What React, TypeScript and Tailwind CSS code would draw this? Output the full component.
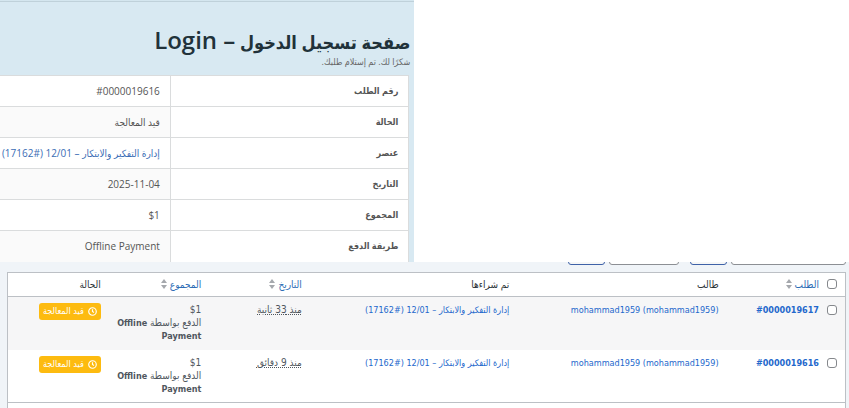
import type { ReactNode } from "react";

type OrderRow = {
  id: string;
  user: string;
  item: string;
  date: string;
  total: string;
};

const details: { label: string; value: string; href?: string }[] = [
  { label: "رقم الطلب", value: "#0000019616" },
  { label: "الحالة", value: "قيد المعالجة" },
  { label: "عنصر", value: "إدارة التفكير والابتكار – 12/01 (#17162)", href: "#item" },
  { label: "التاريخ", value: "2025-11-04" },
  { label: "المجموع", value: "$1" },
  { label: "طريقة الدفع", value: "Offline Payment" },
];

const orders: OrderRow[] = [
  {
    id: "#0000019617",
    user: "mohammad1959 (mohammad1959)",
    item: "إدارة التفكير والابتكار – 12/01 (#17162)",
    date: "منذ 33 ثانية",
    total: "$1",
  },
  {
    id: "#0000019616",
    user: "mohammad1959 (mohammad1959)",
    item: "إدارة التفكير والابتكار – 12/01 (#17162)",
    date: "منذ 9 دقائق",
    total: "$1",
  },
];

function SortLink({ children }: { children: ReactNode }) {
  return (
    <a href="#sort" className="inline-flex items-center gap-[3px] text-[#2c6cb5]">
      {children}
      <svg viewBox="0 0 6 10" className="h-[10px] w-[6px]" fill="#a5a8ad" aria-hidden>
        <path d="M3 0l3 4H0z" />
        <path d="M3 10l3-4H0z" />
      </svg>
    </a>
  );
}

function StatusBadge() {
  return (
    <span className="flex h-[17px] w-fit items-center gap-1 rounded-[3px] bg-[#fdbb10] px-1 text-[9px] leading-none whitespace-nowrap text-white">
      <svg viewBox="0 0 10 10" className="h-[9px] w-[9px]" fill="none" stroke="currentColor" strokeWidth="1.3" aria-hidden>
        <circle cx="5" cy="5" r="4.2" />
        <path d="M5 2.5V5l1.6 1.2" />
      </svg>
      قيد المعالجة
    </span>
  );
}

function Checkbox({ label }: { label: string }) {
  return (
    <input
      type="checkbox"
      aria-label={label}
      className="block h-[10px] w-[10px] appearance-none rounded-[3px] border border-[#85888c] bg-white checked:bg-[#2271b1]"
    />
  );
}

function OrderDetails() {
  return (
    <section className="w-[48.8%] min-w-[380px] border-t border-[#d4e6ef] bg-[#d8e9f2] font-['Open_Sans','DejaVu_Sans_Condensed',sans-serif]">
      <div className="border-t border-[#bfd1da] px-1 pt-[23px]">
        <h1 className="text-[18px] leading-[30px] font-semibold whitespace-nowrap text-[#21323a]">
          صفحة تسجيل الدخول <span className="text-2xl leading-[30px]">– Login</span>
        </h1>
        <p className="h-[18px] text-[9px] leading-[10px] text-[#666]">شكرًا لك. تم إستلام طلبك.</p>
      </div>
      <div className="ps-[5px]">
        <table className="w-full table-fixed border-collapse text-[10px] leading-4 text-[#555]">
          <tbody>
            {details.map(({ label, value, href }) => (
              <tr key={label} className="group h-[31px] border-t border-[#dadcdd] bg-white">
                <th scope="row" className="w-7/12 border-s border-[#dadcdd] px-[10px] text-start text-[9px] font-bold">
                  {label}
                </th>
                <td className="border-s border-[#dadcdd] px-[10px] whitespace-nowrap group-even:bg-[#fafafa]">
                  {href ? <a href={href} className="text-[#3b6db5]">{value}</a> : value}
                </td>
              </tr>
            ))}
          </tbody>
        </table>
      </div>
    </section>
  );
}

function FilterBar() {
  return (
    <div className="flex h-[3px] items-end gap-1 overflow-hidden ps-[3px]">
      <input type="text" aria-label="بحث" className="h-6 w-[115px] shrink-0 rounded-[3px] border border-[#8c8f94] bg-white" />
      <button type="button" aria-label="بحث" className="me-[7px] h-6 w-[37px] shrink-0 rounded-[3px] border border-[#3f62a8] bg-[#f6f7f7]" />
      <select aria-label="الحالة" className="h-6 w-[70px] shrink-0 appearance-none rounded-[3px] border border-[#8c8f94] bg-white" />
      <button type="button" aria-label="تصفية" className="h-6 w-[37px] shrink-0 rounded-[3px] border border-[#3f62a8] bg-[#f6f7f7]" />
    </div>
  );
}

function OrdersTable() {
  return (
    <section className="bg-[#f0f4f8] font-['DejaVu_Sans_Condensed',sans-serif]">
      <FilterBar />
      <div className="ms-[3px] me-[7px] mt-[7px] border border-b-0 border-[#bcc0c5] bg-white">
        <table className="w-full table-fixed border-collapse text-[10px] leading-[13px] text-[#50575e]">
          <colgroup>
            <col className="w-[18px]" />
            <col className="w-[12%]" />
            <col className="w-[25%]" />
            <col className="w-[24.8%]" />
            <col className="w-[12%]" />
            <col className="w-[12%]" />
            <col />
          </colgroup>
          <thead>
            <tr className="h-6 border-b border-[#bcc0c5] text-[#2c3338] [&>th]:ps-2 [&>th]:text-start [&>th]:font-normal">
              <th scope="col"><Checkbox label="تحديد الكل" /></th>
              <th scope="col"><SortLink>الطلب</SortLink></th>
              <th scope="col">طالب</th>
              <th scope="col">تم شراءها</th>
              <th scope="col"><SortLink>التاريخ</SortLink></th>
              <th scope="col"><SortLink>المجموع</SortLink></th>
              <th scope="col">الحالة</th>
            </tr>
          </thead>
          <tbody>
            {orders.map((order) => (
              <tr key={order.id} className="h-[53px] align-top odd:bg-[#f6f6f7] [&>td]:ps-2 [&>td]:pt-[6px]">
                <td><div className="pt-[2px]"><Checkbox label={order.id} /></div></td>
                <td><a href="#order" className="text-[9px] font-bold text-[#2468cc]">{order.id}</a></td>
                <td><a href="#user" className="text-[9px] whitespace-nowrap text-[#2468cc]">{order.user}</a></td>
                <td><a href="#item" className="text-[9px] whitespace-nowrap text-[#2468cc]">{order.item}</a></td>
                <td><abbr title={order.date} className="whitespace-nowrap underline decoration-dotted">{order.date}</abbr></td>
                <td>
                  <div>{order.total}</div>
                  <div>
                    الدفع بواسطة <strong className="text-[9px] leading-none">Offline Payment</strong>
                  </div>
                </td>
                <td><StatusBadge /></td>
              </tr>
            ))}
          </tbody>
          <tfoot>
            <tr className="border-t border-[#bcc0c5]">
              <td colSpan={7} className="h-[5px]" />
            </tr>
          </tfoot>
        </table>
      </div>
    </section>
  );
}

export default function App() {
  return (
    <main dir="rtl" className="bg-white">
      <div className="flex justify-end">
        <OrderDetails />
      </div>
      <OrdersTable />
    </main>
  );
}
